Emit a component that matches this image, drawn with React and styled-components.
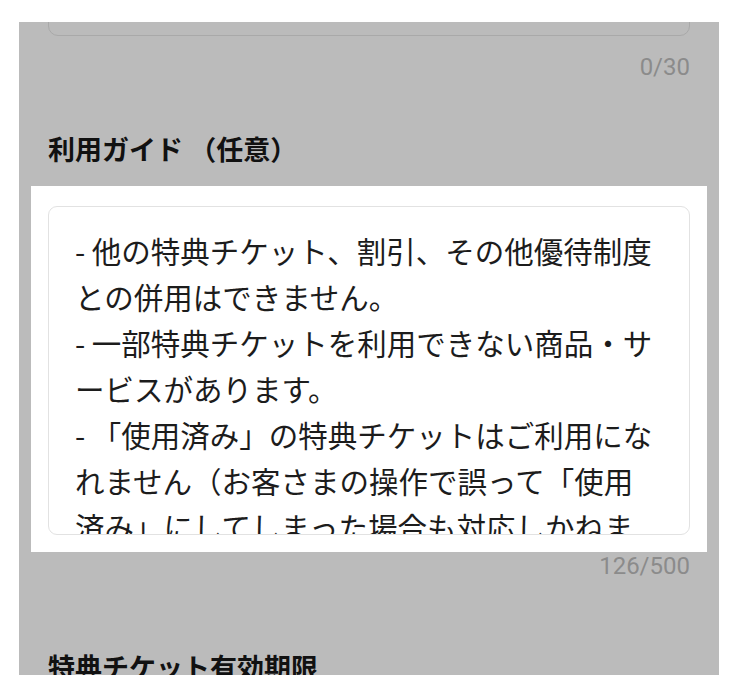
import React from "react";
import styled, { createGlobalStyle } from "styled-components";

const Global = createGlobalStyle`
  html, body { margin: 0; padding: 0; background: #ffffff; }
  body { font-family: "Noto Sans CJK JP", Roboto, sans-serif; }
  * { box-sizing: border-box; }
`;

const Page = styled.div`
  padding: 22px 19px 0;
`;

const Panel = styled.div`
  width: 700px;
  height: 653px;
  background: #bbbbbb;
  overflow: hidden;
  padding: 0 29px;
  display: flex;
  flex-direction: column;
`;

const Field = styled.div`
  display: flex;
  flex-direction: column;
  margin-top: ${(p) => p.$gap || 0}px;
`;

const Heading = styled.div`
  font-family: "Noto Sans CJK JP", sans-serif;
  font-weight: 700;
  font-size: 27px;
  color: #111111;
  margin-bottom: ${(p) => (p.$spaced ? 18 : 0)}px;
  white-space: nowrap;
`;

const Spot = styled.div`
  margin: 0 -17px;
  padding: ${(p) => (p.$top ? "20px" : "0")} 17px 17px;
  background: ${(p) => (p.$lit ? "#ffffff" : "transparent")};
`;

const InputBox = styled.div`
  height: 54px;
  margin-top: -40px;
  border: 1px solid #a9a9a9;
  border-radius: 10px;
`;

const TextBox = styled.div`
  height: 329px;
  border: 1px solid #e2e2e2;
  border-radius: 9px;
  background: #ffffff;
  padding: 20px 20px 0 26px;
  overflow: hidden;
  font-family: "Noto Sans CJK JP", sans-serif;
  font-size: 29.5px;
  line-height: 46px;
  color: #1c1c1c;
  white-space: pre;
`;

const Counter = styled.div`
  align-self: flex-end;
  font-family: Roboto, "Noto Sans CJK JP", sans-serif;
  font-size: 24px;
  color: #8b8b8b;
`;

const guideLines = [
  "- 他の特典チケット、割引、その他優待制度",
  "との併用はできません。",
  "- 一部特典チケットを利用できない商品・サ",
  "ービスがあります。",
  "- 「使用済み」の特典チケットはご利用にな",
  "れません（お客さまの操作で誤って「使用",
  "済み」にしてしまった場合も対応しかねま",
  "す）。",
];

export default function App() {
  return (
    <>
      <Global />
      <Page>
        <Panel>
          <Field>
            <Spot>
              <InputBox />
            </Spot>
            <Counter>0/30</Counter>
          </Field>
          <Field $gap={48}>
            <Heading $spaced>利用ガイド （任意）</Heading>
            <Spot $lit $top>
              <TextBox>{guideLines.join("\n")}</TextBox>
            </Spot>
            <Counter>126/500</Counter>
          </Field>
          <Field $gap={67}>
            <Heading>特典チケット有効期限</Heading>
          </Field>
        </Panel>
      </Page>
    </>
  );
}
